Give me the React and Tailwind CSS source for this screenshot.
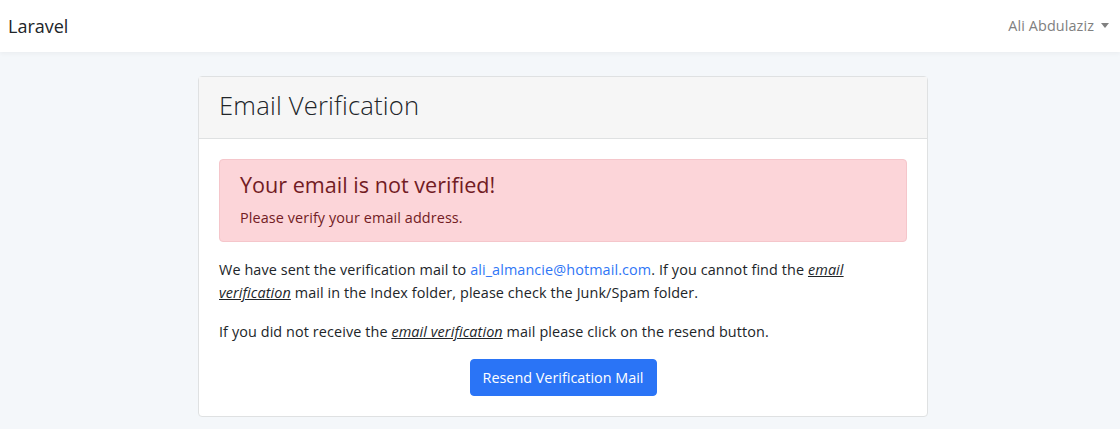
import React from "react";

const Caret = () => (
  <span className="ml-[7px] inline-block h-0 w-0 border-x-[4.5px] border-t-[5px] border-x-transparent border-t-[#808080] align-middle" />
);

export default function App() {
  return (
    <div
      className="min-h-screen bg-[#f4f7fa] text-[14.4px] leading-[1.6] text-[#212529]"
      style={{ fontFamily: '"Open Sans", sans-serif' }}
    >
      <nav className="flex h-[52px] items-center justify-between bg-white px-2 shadow-[0_2px_4px_rgba(0,0,0,0.04)]">
        <a className="text-[18px] text-[#212529]">Laravel</a>
        <div className="flex items-center pr-[3px] text-[#808080] tracking-[0.1px]">
          Ali Abdulaziz
          <Caret />
        </div>
      </nav>

      <main className="flex justify-center pl-[6px] pt-6">
        <div className="w-[730px] rounded border border-[#dfe1e2] bg-white">
          <div className="flex h-[62px] items-center border-b border-[#dfe1e2] bg-[#f6f6f6] px-5 pb-[3px]">
            <h3 className="text-[25.6px] font-light leading-[1.2] tracking-[0.2px] text-[#212529]">Email Verification</h3>
          </div>
          <div className="p-5 tracking-[0.1px]">
            <div className="mb-4 rounded border border-[#f5c6cb] bg-[#fcd5d9] px-5 py-3 text-[#721c24]">
              <h4 className="mb-2 text-[21.6px] leading-[1.2] tracking-normal">Your email is not verified!</h4>
              <p>Please verify your email address.</p>
            </div>
            <p className="mb-4">
              We have sent the verification mail to{" "}
              <a className="text-[#2f76f6]">ali_almancie@hotmail.com</a>. If you cannot find the{" "}
              <u>
                <i>email verification</i>
              </u>{" "}
              mail in the Index folder, please check the Junk/Spam folder.
            </p>
            <p className="mb-4">
              If you did not receive the{" "}
              <u>
                <i>email verification</i>
              </u>{" "}
              mail please click on the resend button.
            </p>
            <div className="text-center">
              <button className="rounded border border-[#2a74f6] bg-[#2a74f6] px-3 py-[6px] tracking-normal text-white">
                Resend Verification Mail
              </button>
            </div>
          </div>
        </div>
      </main>
    </div>
  );
}
